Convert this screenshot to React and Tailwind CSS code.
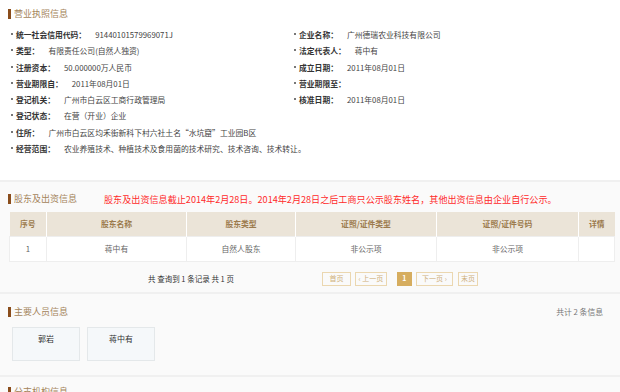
import React from "react";

const Dot = () => (
  <span className="inline-block w-[2px] h-[2px] bg-[#777] mr-[3px] mt-[4px] shrink-0" />
);

const Item = ({ label, value, gap = "ml-[9px]", span = false }) => (
  <div className={`flex items-start h-[16.3px] leading-[12px] ${span ? "col-span-2" : ""}`}>
    <Dot />
    <span className="font-bold text-[#333] whitespace-nowrap">{label}</span>
    <span className={`${gap} text-[#444] whitespace-nowrap`}>{value}</span>
  </div>
);

const Title = ({ children }) => (
  <div className="flex items-center h-[12px]">
    <span className="inline-block w-[3px] h-[10px] bg-[#8a4d1c] mr-[3px]" />
    <span className="text-[9px] text-[#a4845a] leading-[12px]">{children}</span>
  </div>
);

export default function App() {
  return (
    <div className="w-[620px] h-[392px] overflow-hidden bg-[#fafafa] font-['Noto_Sans_CJK_SC',sans-serif] text-[7.8px]">
      {/* Section 1 */}
      <div className="bg-white h-[180px] pt-[8px] pl-[8px]">
        <Title>营业执照信息</Title>
        <div className="grid grid-cols-[283px_1fr] mt-[9px] pl-[3px]">
          <Item label="统一社会信用代码：" value="91440101579969071J" />
          <Item label="企业名称：" value="广州德瑞农业科技有限公司" />
          <Item label="类型：" value="有限责任公司(自然人独资)" />
          <Item label="法定代表人：" value="蒋中有" />
          <Item label="注册资本：" value="50.000000万人民币" />
          <Item label="成立日期：" value="2011年08月01日" />
          <Item label="营业期限自：" value="2011年08月01日" />
          <Item label="营业期限至：" value="" />
          <Item label="登记机关：" value="广州市白云区工商行政管理局" />
          <Item label="核准日期：" value="2011年08月01日" />
          <Item label="登记状态：" value="在营（开业）企业" span />
          <Item label="住所：" value="广州市白云区均禾街新科下村六社土名“水坑窟”工业园B区" span />
          <Item label="经营范围：" value="农业养殖技术、种植技术及食用菌的技术研究、技术咨询、技术转让。" span />
        </div>
      </div>
      <div className="h-[2px] bg-[#f0f0f0]" />

      {/* Section 2 */}
      <div className="h-[110px] pt-[11px] px-[8px]">
        <div className="flex items-center h-[12px]">
          <div className="w-[96px]">
            <Title>股东及出资信息</Title>
          </div>
          <span className="text-[9.1px] text-[#ff2b2b] leading-[12px] whitespace-nowrap">
            股东及出资信息截止2014年2月28日。2014年2月28日之后工商只公示股东姓名，其他出资信息由企业自行公示。
          </span>
        </div>
        <table className="mt-[7px] ml-[1px] w-[605px] border-collapse table-fixed text-center">
          <colgroup>
            <col className="w-[37px]" />
            <col className="w-[140px]" />
            <col className="w-[109px]" />
            <col className="w-[141px]" />
            <col className="w-[142px]" />
            <col className="w-[36px]" />
          </colgroup>
          <thead>
            <tr className="h-[24px] bg-[#ebe4d8] text-[#9b7a4c] font-bold">
              <th className="border-r border-white font-bold">序号</th>
              <th className="border-r border-white font-bold">股东名称</th>
              <th className="border-r border-white font-bold">股东类型</th>
              <th className="border-r border-white font-bold">证照/证件类型</th>
              <th className="border-r border-white font-bold">证照/证件号码</th>
              <th className="font-bold">详情</th>
            </tr>
          </thead>
          <tbody>
            <tr className="h-[25px] bg-white text-[#666]">
              <td className="border border-[#eeeeee]">1</td>
              <td className="border border-[#eeeeee]">蒋中有</td>
              <td className="border border-[#eeeeee]">自然人股东</td>
              <td className="border border-[#eeeeee]">非公示项</td>
              <td className="border border-[#eeeeee]">非公示项</td>
              <td className="border border-[#eeeeee]"></td>
            </tr>
          </tbody>
        </table>
        <div className="flex items-center mt-[10px] h-[14px]">
          <span className="ml-[140px] text-[#333] text-[7.5px] whitespace-nowrap">共 查询到 1 条记录 共 1 页</span>
          <div className="flex items-center ml-[88px] text-[7px] text-[#cfb07a]">
            <span className="w-[29px] h-[14px] border border-[#ebd7b0] flex items-center justify-center">首页</span>
            <span className="ml-[4px] w-[32px] h-[14px] border border-[#ebd7b0] flex items-center justify-center">‹ 上一页</span>
            <span className="ml-[10px] w-[15px] h-[14px] bg-[#d6ad5f] text-white font-bold flex items-center justify-center">1</span>
            <span className="ml-[4px] w-[37px] h-[14px] border border-[#ebd7b0] flex items-center justify-center">下一页 ›</span>
            <span className="ml-[5px] w-[20px] h-[14px] border border-[#ebd7b0] flex items-center justify-center">末页</span>
          </div>
        </div>
      </div>
      <div className="h-[2px] bg-[#f0f0f0]" />

      {/* Section 3 */}
      <div className="h-[81px] pt-[12px] px-[8px]">
        <div className="flex items-center justify-between">
          <Title>主要人员信息</Title>
          <span className="mr-[9px] text-[#777] text-[7.8px] leading-[12px]">共计 2 条信息</span>
        </div>
        <div className="flex mt-[9px] ml-[4px] gap-[7px]">
          <div className="w-[68px] h-[34px] border border-[#e4e8ea] bg-[#f5f8fa] text-center pt-[5px] text-[#333] text-[8px]">郭岩</div>
          <div className="w-[68px] h-[34px] border border-[#e4e8ea] bg-[#f5f8fa] text-center pt-[5px] text-[#333] text-[8px]">蒋中有</div>
        </div>
      </div>
      <div className="h-[2px] bg-[#f0f0f0]" />

      {/* Section 4 */}
      <div className="pt-[9px] px-[8px]">
        <Title>分支机构信息</Title>
      </div>
    </div>
  );
}
